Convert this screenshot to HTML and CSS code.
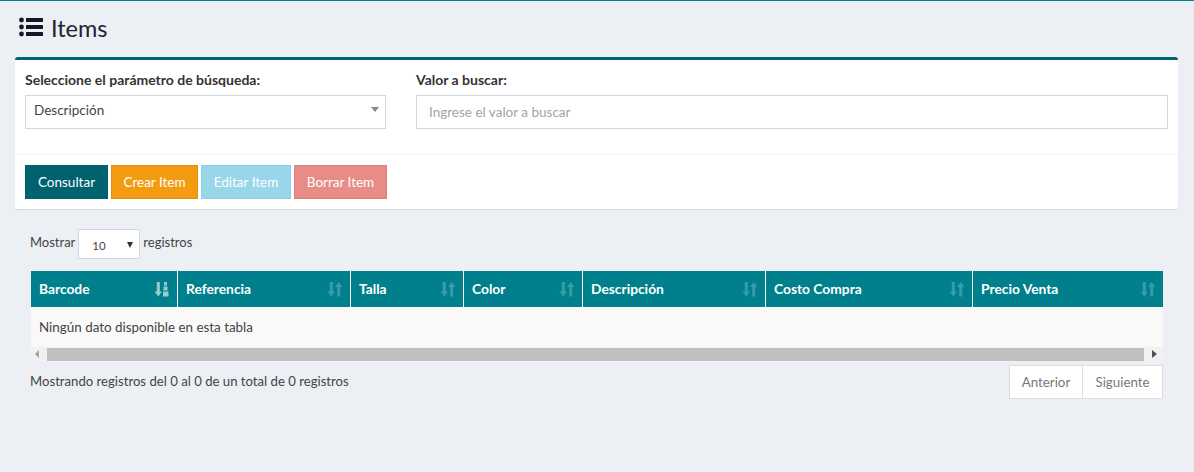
FILE: index.html
```html
<!DOCTYPE html>
<html lang="es">
<head>
<meta charset="utf-8">
<title>Items</title>
<link rel="stylesheet" href="styles.css">
</head>
<body>
<section class="page-header">
  <svg class="title-icon" viewBox="0 0 24 20" aria-hidden="true">
    <circle cx="2.5" cy="3" r="2.4"/><circle cx="2.5" cy="10" r="2.4"/><circle cx="2.5" cy="17" r="2.4"/>
    <rect x="7" y="1" width="17" height="4" rx=".6"/><rect x="7" y="8" width="17" height="4" rx=".6"/><rect x="7" y="15" width="17" height="4" rx=".6"/>
  </svg>
  <h1>Items</h1>
</section>
<section class="card">
  <div class="card-body">
    <div class="field field-left">
      <label>Seleccione el parámetro de búsqueda:</label>
      <div class="select-box"><span>Descripción</span><i class="caret"></i></div>
    </div>
    <div class="field field-right">
      <label>Valor a buscar:</label>
      <input class="text-input" type="text" placeholder="Ingrese el valor a buscar">
    </div>
  </div>
  <div class="card-footer">
    <button class="btn btn-query">Consultar</button>
    <button class="btn btn-create">Crear Item</button>
    <button class="btn btn-edit">Editar Item</button>
    <button class="btn btn-delete">Borrar Item</button>
  </div>
</section>
<section class="table-area">
  <div class="length"><span class="length-text">Mostrar</span> <span class="length-select"><span>10</span><i class="mini-caret"></i></span> <span class="length-text">registros</span></div>
  <div class="table-wrap">
    <div class="thead">
      <div class="th w1">Barcode<svg class="sort active" viewBox="0 0 16 16"><path d="M2.800 1h3v9.500h2.200L4.300 15.500.6 10.500h2.200z"/><path d="M10 1h3v3.500h-3zM9.500 5.500h4V9.500h-4zM9 10.500h5.500v5H9z"/></svg></div>
      <div class="th w2">Referencia<svg class="sort" viewBox="0 0 16 16"><path d="M2.800 1h3v9.500h2.200L4.300 15.500.6 10.500h2.200zM10.200 15.500h3V6h2.200L11.700 1 8 6h2.200z"/></svg></div>
      <div class="th w3">Talla<svg class="sort" viewBox="0 0 16 16"><path d="M2.800 1h3v9.500h2.200L4.300 15.500.6 10.500h2.200zM10.200 15.500h3V6h2.200L11.700 1 8 6h2.200z"/></svg></div>
      <div class="th w4">Color<svg class="sort" viewBox="0 0 16 16"><path d="M2.800 1h3v9.500h2.200L4.300 15.500.6 10.500h2.200zM10.200 15.500h3V6h2.200L11.700 1 8 6h2.200z"/></svg></div>
      <div class="th w5">Descripción<svg class="sort" viewBox="0 0 16 16"><path d="M2.800 1h3v9.500h2.200L4.300 15.500.6 10.500h2.200zM10.200 15.500h3V6h2.200L11.700 1 8 6h2.200z"/></svg></div>
      <div class="th w6">Costo Compra<svg class="sort" viewBox="0 0 16 16"><path d="M2.800 1h3v9.500h2.200L4.300 15.500.6 10.500h2.200zM10.200 15.500h3V6h2.200L11.700 1 8 6h2.200z"/></svg></div>
      <div class="th w7">Precio Venta<svg class="sort" viewBox="0 0 16 16"><path d="M2.800 1h3v9.500h2.200L4.300 15.500.6 10.500h2.200zM10.200 15.500h3V6h2.200L11.700 1 8 6h2.200z"/></svg></div>
    </div>
    <div class="empty-row">Ningún dato disponible en esta tabla</div>
    <div class="scrollbar">
      <i class="arrow-left"></i>
      <div class="thumb"></div>
      <i class="arrow-right"></i>
    </div>
  </div>
  <div class="table-foot">
    <div class="info">Mostrando registros del 0 al 0 de un total de 0 registros</div>
    <div class="pager"><span class="page-btn">Anterior</span><span class="page-btn">Siguiente</span></div>
  </div>
</section>
</body>
</html>
```
FILE: styles.css
```css
* { box-sizing: border-box; }
html, body { height: 100%; }
body {
  margin: 0;
  background: #ecf0f5;
  border-top: 1px solid #00808c;
  font-family: "Lato", "Noto Sans", sans-serif;
  font-size: 14px;
  color: #333;
  overflow: hidden;
}
.page-header {
  display: flex;
  align-items: center;
  gap: 8px;
  height: 56px;
  padding: 0 0 2px 19px;
}
.title-icon { width: 24px; height: 20px; fill: #111827; margin-top: -2px; }
h1 { margin: 2px 0 0; font-size: 23.500px; font-weight: 400; color: #1c2430; line-height: 1; }
.card {
  margin: 0 16px 0 15px;
  height: 152px;
  background: #fff;
  border-top: 3px solid #00656f;
  border-radius: 3px;
  box-shadow: 0 1px 1px rgba(0,0,0,.1);
}
.card-body {
  display: flex;
  gap: 30px;
  height: 94px;
  padding: 11px 10px 0;
}
.field { display: flex; flex-direction: column; gap: 7px; }
.field-left { width: 361px; }
.field-right { flex: 1; }
label { font-weight: 700; font-size: 14px; line-height: 17px; color: #333; }
.select-box {
  display: flex; align-items: center; justify-content: space-between;
  height: 34px;
  padding: 0 6px 5px 8px;
  border: 1px solid #d2d6de;
  color: #444;
  font-size: 13.500px;
}
.caret { width: 0; height: 0; border: 4.500px solid transparent; border-top: 5px solid #888; border-bottom: 0; }
.text-input {
  height: 34px;
  width: 100%;
  padding: 0 12px;
  border: 1px solid #d2d6de;
  font: inherit;
  font-size: 13.500px;
  outline: none;
}
.text-input::placeholder { color: #a4a4a4; opacity: 1; }
.card-footer {
  display: flex;
  gap: 3px;
  height: 55px;
  padding: 10px 10px;
  border-top: 1px solid #f4f4f4;
}
.btn {
  height: 34px;
  padding: 0;
  border: 1px solid transparent;
  font: inherit;
  font-size: 13.500px;
  color: #fff;
}
.btn-query { width: 83px; background: #00626f; }
.btn-create { width: 87px; background: #f39c12; border-color: #e08e0b; }
.btn-edit { width: 90px; background: #98d6ea; border-color: #8dcfe4; }
.btn-delete { width: 93px; background: #e78c87; border-color: #df7f7a; }
.table-area { padding: 20px 31px 0 30px; }
.length { display: flex; align-items: center; gap: 3px; height: 30px; color: #444; font-size: 13px; }
.length-text { margin-bottom: 4px; }
.length-select {
  display: flex; align-items: center; justify-content: space-between;
  width: 62px; height: 30px;
  padding: 2px 6px 0 13px;
  background: #fff;
  border: 1px solid #d2d6de;
  font-size: 11.500px;
}
.mini-caret { width: 0; height: 0; border: 3.500px solid transparent; border-top: 6px solid #333; border-bottom: 0; }
.table-wrap { margin-top: 12px; }
.thead {
  display: flex;
  height: 36px;
  margin-left: 1px;
  background: #00808c;
  color: #fff;
  font-weight: 700;
  font-size: 13.800px;
}
.th {
  display: flex; align-items: center; justify-content: space-between;
  padding: 0 7px 2px 8px;
  border-right: 1px solid #fff;
}
.th:last-child { border-right: 0; }
.w1 { width: 147px; }
.w2 { width: 173px; }
.w3 { width: 113px; }
.w4 { width: 119px; }
.w5 { width: 183px; }
.w6 { width: 207px; }
.w7 { width: 190px; }
.sort { width: 16px; height: 16px; fill: #fff; opacity: .22; margin-top: 2px; }
.sort.active { opacity: .6; }
.empty-row {
  height: 40px;
  margin-left: 1px;
  padding: 0 8px;
  display: flex; align-items: center;
  background: #f9f9f9;
  color: #444;
  font-size: 13.400px;
}
.scrollbar {
  display: flex; align-items: center;
  height: 14px;
  margin-left: 1px;
  background: #f1f1f1;
}
.arrow-left { width: 0; height: 0; margin: 0 8px 0 4px; border: 4px solid transparent; border-right: 4px solid #a3a3a3; border-left: 0; }
.thumb { flex: 1; height: 13px; background: #c0c0c0; }
.arrow-right { width: 0; height: 0; margin: 0 6px 0 8px; border: 4px solid transparent; border-left: 5px solid #505050; border-right: 0; }
.table-foot { display: flex; justify-content: space-between; margin-top: 4px; }
.info { padding-top: 8px; color: #444; font-size: 13.150px; }
.pager { display: flex; height: 34px; }
.page-btn {
  display: flex; align-items: center; justify-content: center;
  height: 34px;
  background: #fff;
  border: 1px solid #ddd;
  color: #777;
  font-size: 13.300px;
}
.page-btn:first-child { width: 74px; }
.page-btn:last-child { width: 80px; border-left: 0; }
```
